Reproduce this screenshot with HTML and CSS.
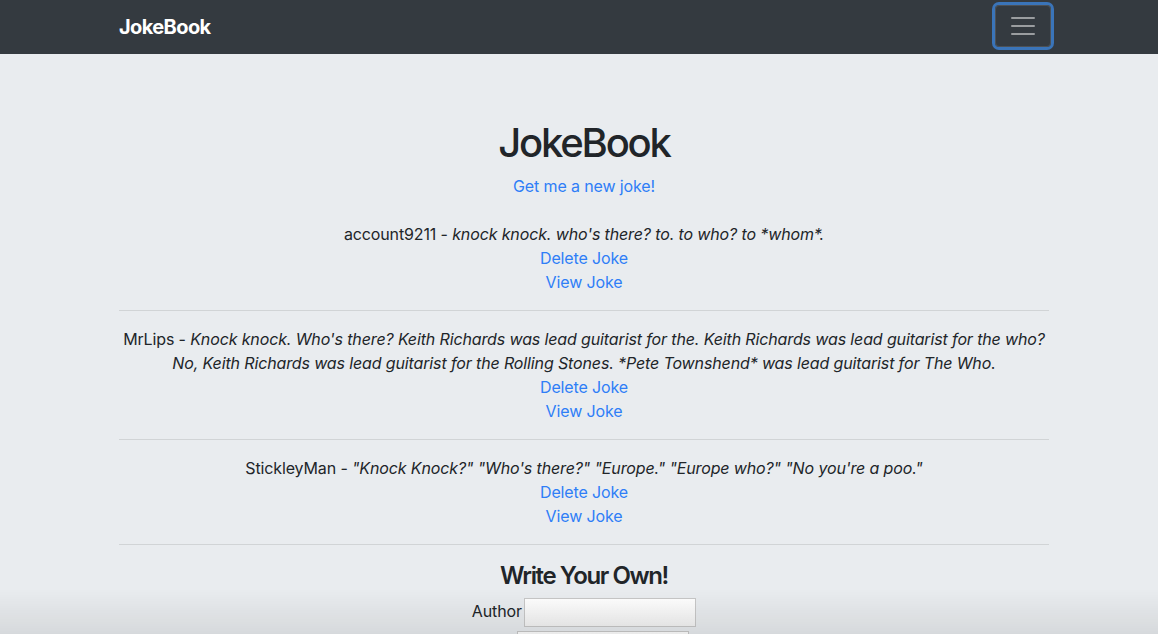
FILE: index.html
```html
<!DOCTYPE html>
<html lang="en">
<head>
<meta charset="utf-8">
<title>JokeBook</title>
<link rel="stylesheet" href="styles.css">
</head>
<body>
<nav class="navbar">
  <div class="nav-inner">
    <a class="brand" href="#">JokeBook</a>
    <button class="toggler" type="button" aria-label="Toggle navigation">
      <svg width="30" height="30" viewBox="0 0 30 30" aria-hidden="true">
        <path d="M4 7h22M4 15h22M4 23h22" stroke="rgba(255,255,255,0.5)" stroke-width="2" stroke-linecap="round"/>
      </svg>
    </button>
  </div>
</nav>
<main class="container">
  <h1 class="title">JokeBook</h1>
  <p class="new-joke"><a href="#">Get me a new joke!</a></p>

  <div class="joke">
    <div>account9211 - <em>knock knock. who's there? to. to who? to *whom*.</em></div>
    <div><a href="#">Delete Joke</a></div>
    <div><a href="#">View Joke</a></div>
  </div>
  <hr>
  <div class="joke">
    <div>MrLips - <em>Knock knock. Who's there? Keith Richards was lead guitarist for the. Keith Richards was lead guitarist for the who?<br>No, Keith Richards was lead guitarist for the Rolling Stones. *Pete Townshend* was lead guitarist for The Who.</em></div>
    <div><a href="#">Delete Joke</a></div>
    <div><a href="#">View Joke</a></div>
  </div>
  <hr>
  <div class="joke">
    <div>StickleyMan - <em>"Knock Knock?" "Who's there?" "Europe." "Europe who?" "No you're a poo."</em></div>
    <div><a href="#">Delete Joke</a></div>
    <div><a href="#">View Joke</a></div>
  </div>
  <hr>
  <h4 class="write">Write Your Own!</h4>
  <form class="form">
    <div class="row"><label for="author">Author</label> <input id="author" type="text"></div>
    <div class="row"><label for="joke">Joke</label> <input id="joke" type="text"></div>
  </form>
</main>
<div class="bottom-shade"></div>
</body>
</html>
```
FILE: styles.css
```css
* { box-sizing: border-box; }
html, body { margin: 0; padding: 0; }
body {
  background: #e9ecef;
  color: #212529;
  font-family: Inter, "Liberation Sans", Arial, sans-serif;
  font-size: 16px;
  line-height: 24px;
  letter-spacing: -0.13px;
  text-align: center;
}
a { color: #2f7ef7; text-decoration: none; }

.navbar {
  background: #343a40;
  height: 54px;
}
.nav-inner {
  width: 940px;
  margin: 0 auto;
  height: 54px;
  display: flex;
  align-items: center;
  justify-content: space-between;
  padding-left: 10px;
}
.brand {
  color: #fff;
  font-weight: bold;
  font-size: 20px;
  letter-spacing: -0.6px;
}
.toggler {
  width: 56px;
  height: 42px;
  margin-right: -2px;
  margin-top: -2px;
  background: transparent;
  border: 1px solid rgba(255,255,255,0.12);
  border-radius: 4px;
  display: flex;
  align-items: center;
  justify-content: center;
  padding: 0;
  box-shadow: 0 0 0 3px #3a74b9;
}

.container {
  width: 940px;
  margin: 0 auto;
  padding-top: 65px;
  padding-left: 10px;
}
.title {
  font-size: 40px;
  font-weight: 500;
  line-height: 48px;
  margin: 0 0 7px;
  letter-spacing: -2.2px;
}
.new-joke { margin: 0 0 24px; }
.joke em { font-style: italic; }
hr {
  border: 0;
  border-top: 1px solid rgba(0,0,0,0.1);
  margin: 16px 0;
}
.write {
  font-size: 24px;
  font-weight: 600;
  line-height: 29px;
  margin: 0 0 8px;
  letter-spacing: -1.4px;
}
.form .row { margin-bottom: 4px; }
.form label { margin-right: -2px; }
.form input {
  width: 172px;
  height: 29px;
  border: 1px solid #c8c8c8;
  background: linear-gradient(#ffffff, #f4f4f4);
  vertical-align: middle;
  font-size: 14px;
}
.bottom-shade {
  position: fixed;
  left: 0; right: 0; bottom: 0;
  height: 45px;
  background: linear-gradient(rgba(0,0,0,0), rgba(0,0,0,0.08));
  pointer-events: none;
}
```
